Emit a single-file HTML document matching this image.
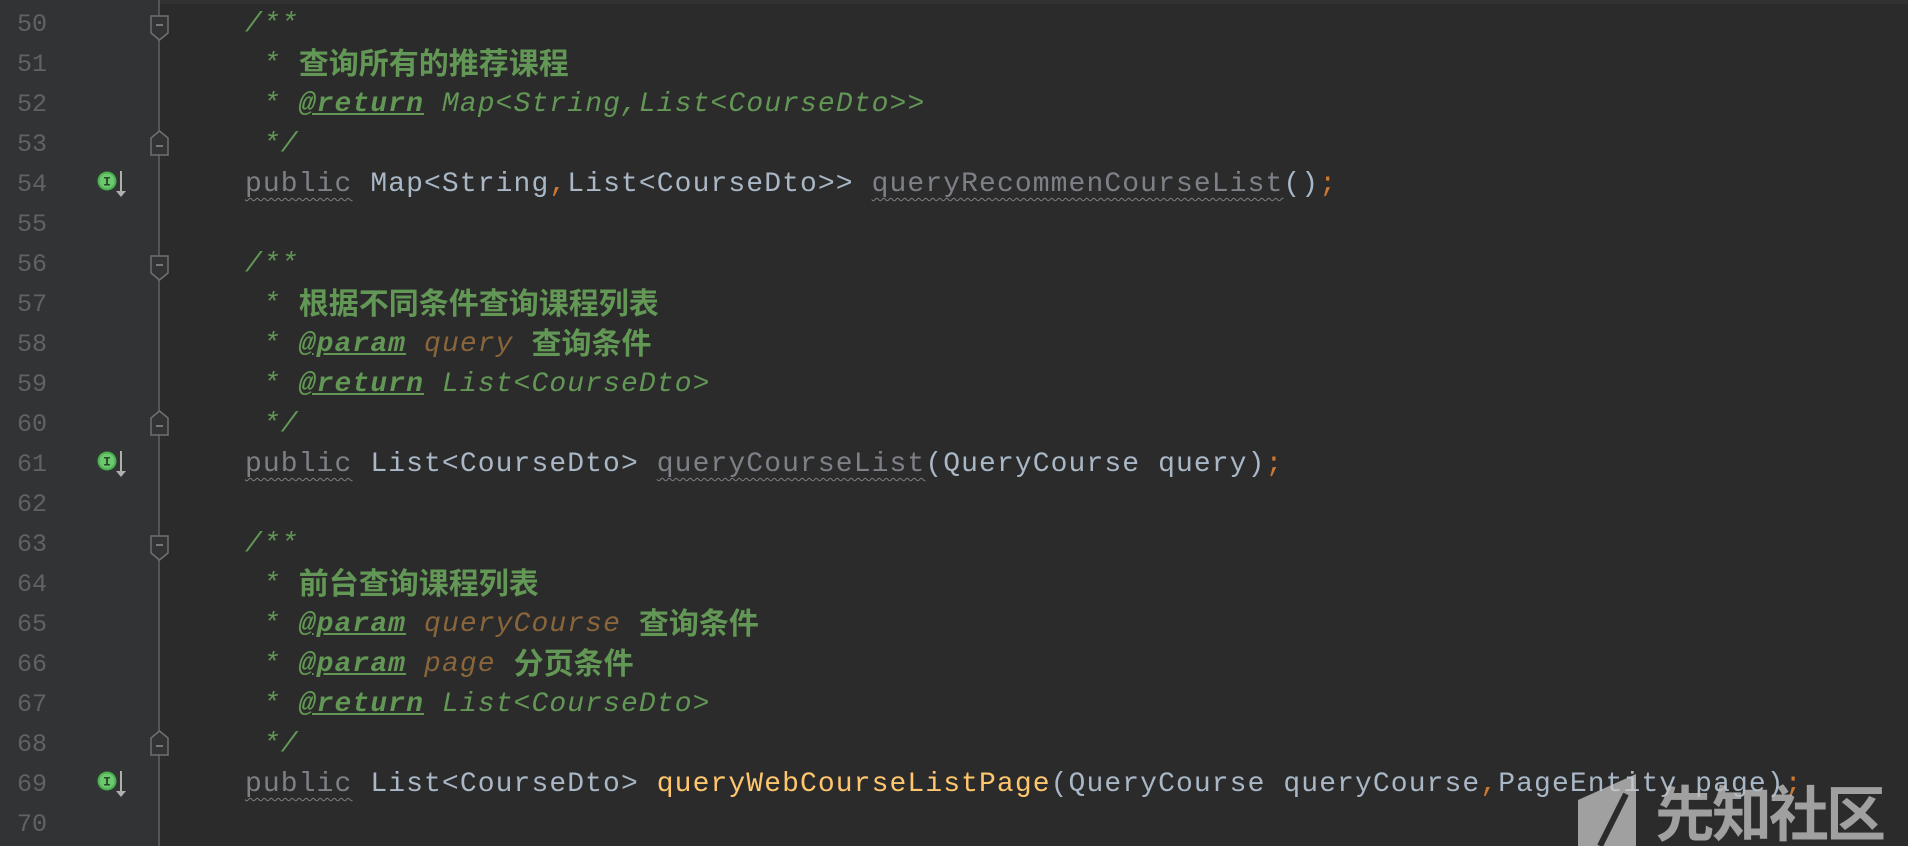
<!DOCTYPE html>
<html style="background:#2b2b2b"><head><meta charset="utf-8"><style>
html,body{margin:0;width:1908px;height:846px;background:#2b2b2b;overflow:hidden}
body{position:relative}
#g{position:absolute;left:0;top:0;width:159px;height:846px;background:#313335}
#sep{position:absolute;left:158px;top:0;width:2px;height:846px;background:#555555}
#topb{position:absolute;left:160px;top:0;width:1748px;height:4px;background:#323232}
.n{position:absolute;left:0;width:47px;text-align:right;font:25px/40px "Liberation Mono",monospace;color:#606366}
.l{position:absolute;left:245px;height:40px;white-space:pre;font:28px/40px "Liberation Mono","Noto Sans CJK SC",monospace;letter-spacing:1.1px;color:#a9b7c6}
.c{color:#629755;font-style:italic}
.cj{font-family:"Noto Sans CJK SC",sans-serif;font-style:normal;font-weight:bold;font-size:30px;line-height:20px;letter-spacing:0;color:#629755;position:relative;top:3px}
.t{color:#629755;font-weight:bold;text-decoration:underline;font-style:italic}
.p{color:#8a653b;font-style:italic}
.o{color:#cc7832}
.u{color:#7d8187;text-decoration:underline wavy #7d8187;text-decoration-thickness:1px;text-underline-offset:6px}
.f{color:#ffc66d}
.fold{position:absolute;left:150px}
.ic{position:absolute;left:97px}
</style></head><body>
<div id="g"></div><div id="sep"></div><div id="topb"></div>
<div class="n" style="top:5px">50</div><div class="n" style="top:45px">51</div><div class="n" style="top:85px">52</div><div class="n" style="top:125px">53</div><div class="n" style="top:165px">54</div><div class="n" style="top:205px">55</div><div class="n" style="top:245px">56</div><div class="n" style="top:285px">57</div><div class="n" style="top:325px">58</div><div class="n" style="top:365px">59</div><div class="n" style="top:405px">60</div><div class="n" style="top:445px">61</div><div class="n" style="top:485px">62</div><div class="n" style="top:525px">63</div><div class="n" style="top:565px">64</div><div class="n" style="top:605px">65</div><div class="n" style="top:645px">66</div><div class="n" style="top:685px">67</div><div class="n" style="top:725px">68</div><div class="n" style="top:765px">69</div><div class="n" style="top:805px">70</div>

<svg class="fold" style="top:15px" width="20" height="26"><path d="M1 1H18V18L9.5 25L1 18Z" fill="#313335" stroke="#707070" stroke-width="1.5"/><path d="M6 10H13" stroke="#909090" stroke-width="1.5"/></svg>
<svg class="fold" style="top:130px" width="20" height="26"><path d="M1 25H18V8L9.5 1L1 8Z" fill="#313335" stroke="#707070" stroke-width="1.5"/><path d="M6 16H13" stroke="#909090" stroke-width="1.5"/></svg>
<svg class="fold" style="top:255px" width="20" height="26"><path d="M1 1H18V18L9.5 25L1 18Z" fill="#313335" stroke="#707070" stroke-width="1.5"/><path d="M6 10H13" stroke="#909090" stroke-width="1.5"/></svg>
<svg class="fold" style="top:410px" width="20" height="26"><path d="M1 25H18V8L9.5 1L1 8Z" fill="#313335" stroke="#707070" stroke-width="1.5"/><path d="M6 16H13" stroke="#909090" stroke-width="1.5"/></svg>
<svg class="fold" style="top:535px" width="20" height="26"><path d="M1 1H18V18L9.5 25L1 18Z" fill="#313335" stroke="#707070" stroke-width="1.5"/><path d="M6 10H13" stroke="#909090" stroke-width="1.5"/></svg>
<svg class="fold" style="top:730px" width="20" height="26"><path d="M1 25H18V8L9.5 1L1 8Z" fill="#313335" stroke="#707070" stroke-width="1.5"/><path d="M6 16H13" stroke="#909090" stroke-width="1.5"/></svg>

<svg class="ic" style="top:170px" width="34" height="30"><circle cx="10" cy="11" r="9.5" fill="#4caf50"/><circle cx="10" cy="11" r="7.5" fill="#6bc86f"/><text x="10" y="15.5" text-anchor="middle" font-family="Liberation Mono" font-weight="bold" font-size="13" fill="#2a4a2a">I</text><path d="M24 1V22" stroke="#b0b0b0" stroke-width="2"/><path d="M19 21H29L24 27Z" fill="#b0b0b0"/></svg>
<svg class="ic" style="top:450px" width="34" height="30"><circle cx="10" cy="11" r="9.5" fill="#4caf50"/><circle cx="10" cy="11" r="7.5" fill="#6bc86f"/><text x="10" y="15.5" text-anchor="middle" font-family="Liberation Mono" font-weight="bold" font-size="13" fill="#2a4a2a">I</text><path d="M24 1V22" stroke="#b0b0b0" stroke-width="2"/><path d="M19 21H29L24 27Z" fill="#b0b0b0"/></svg>
<svg class="ic" style="top:770px" width="34" height="30"><circle cx="10" cy="11" r="9.5" fill="#4caf50"/><circle cx="10" cy="11" r="7.5" fill="#6bc86f"/><text x="10" y="15.5" text-anchor="middle" font-family="Liberation Mono" font-weight="bold" font-size="13" fill="#2a4a2a">I</text><path d="M24 1V22" stroke="#b0b0b0" stroke-width="2"/><path d="M19 21H29L24 27Z" fill="#b0b0b0"/></svg>

<div class="l c" style="top:5px">/**</div>
<div class="l c" style="top:45px"> * <span class="cj">查询所有的推荐课程</span></div>
<div class="l c" style="top:85px"> * <span class="t">@return</span> Map<span style="font-style:normal">&lt;</span>String,List<span style="font-style:normal">&lt;</span>CourseDto<span style="font-style:normal">&gt;&gt;</span></div>
<div class="l c" style="top:125px"> */</div>
<div class="l" style="top:165px"><span class="u">public</span> Map&lt;String<span class="o">,</span>List&lt;CourseDto&gt;&gt; <span class="u">queryRecommenCourseList</span>()<span class="o">;</span></div>
<div class="l c" style="top:245px">/**</div>
<div class="l c" style="top:285px"> * <span class="cj">根据不同条件查询课程列表</span></div>
<div class="l c" style="top:325px"> * <span class="t">@param</span> <span class="p">query</span> <span class="cj">查询条件</span></div>
<div class="l c" style="top:365px"> * <span class="t">@return</span> List<span style="font-style:normal">&lt;</span>CourseDto<span style="font-style:normal">&gt;</span></div>
<div class="l c" style="top:405px"> */</div>
<div class="l" style="top:445px"><span class="u">public</span> List&lt;CourseDto&gt; <span class="u">queryCourseList</span>(QueryCourse query)<span class="o">;</span></div>
<div class="l c" style="top:525px">/**</div>
<div class="l c" style="top:565px"> * <span class="cj">前台查询课程列表</span></div>
<div class="l c" style="top:605px"> * <span class="t">@param</span> <span class="p">queryCourse</span> <span class="cj">查询条件</span></div>
<div class="l c" style="top:645px"> * <span class="t">@param</span> <span class="p">page</span> <span class="cj">分页条件</span></div>
<div class="l c" style="top:685px"> * <span class="t">@return</span> List<span style="font-style:normal">&lt;</span>CourseDto<span style="font-style:normal">&gt;</span></div>
<div class="l c" style="top:725px"> */</div>
<div class="l" style="top:765px"><span class="u">public</span> List&lt;CourseDto&gt; <span class="f">queryWebCourseListPage</span>(QueryCourse queryCourse<span class="o">,</span>PageEntity page)<span class="o">;</span></div>

<svg style="position:absolute;left:1578px;top:774px" width="64" height="72"><path d="M0 26L58 0V72H24L0 72Z" fill="rgba(200,200,200,0.75)"/><path d="M22 72L48 20" stroke="#2b2b2b" stroke-width="6"/></svg>
<div style="position:absolute;left:1655px;top:776px;font:bold 60px/70px 'Noto Sans CJK SC',sans-serif;color:rgba(190,190,190,0.8);letter-spacing:-3px">先知社区</div>
</body></html>
